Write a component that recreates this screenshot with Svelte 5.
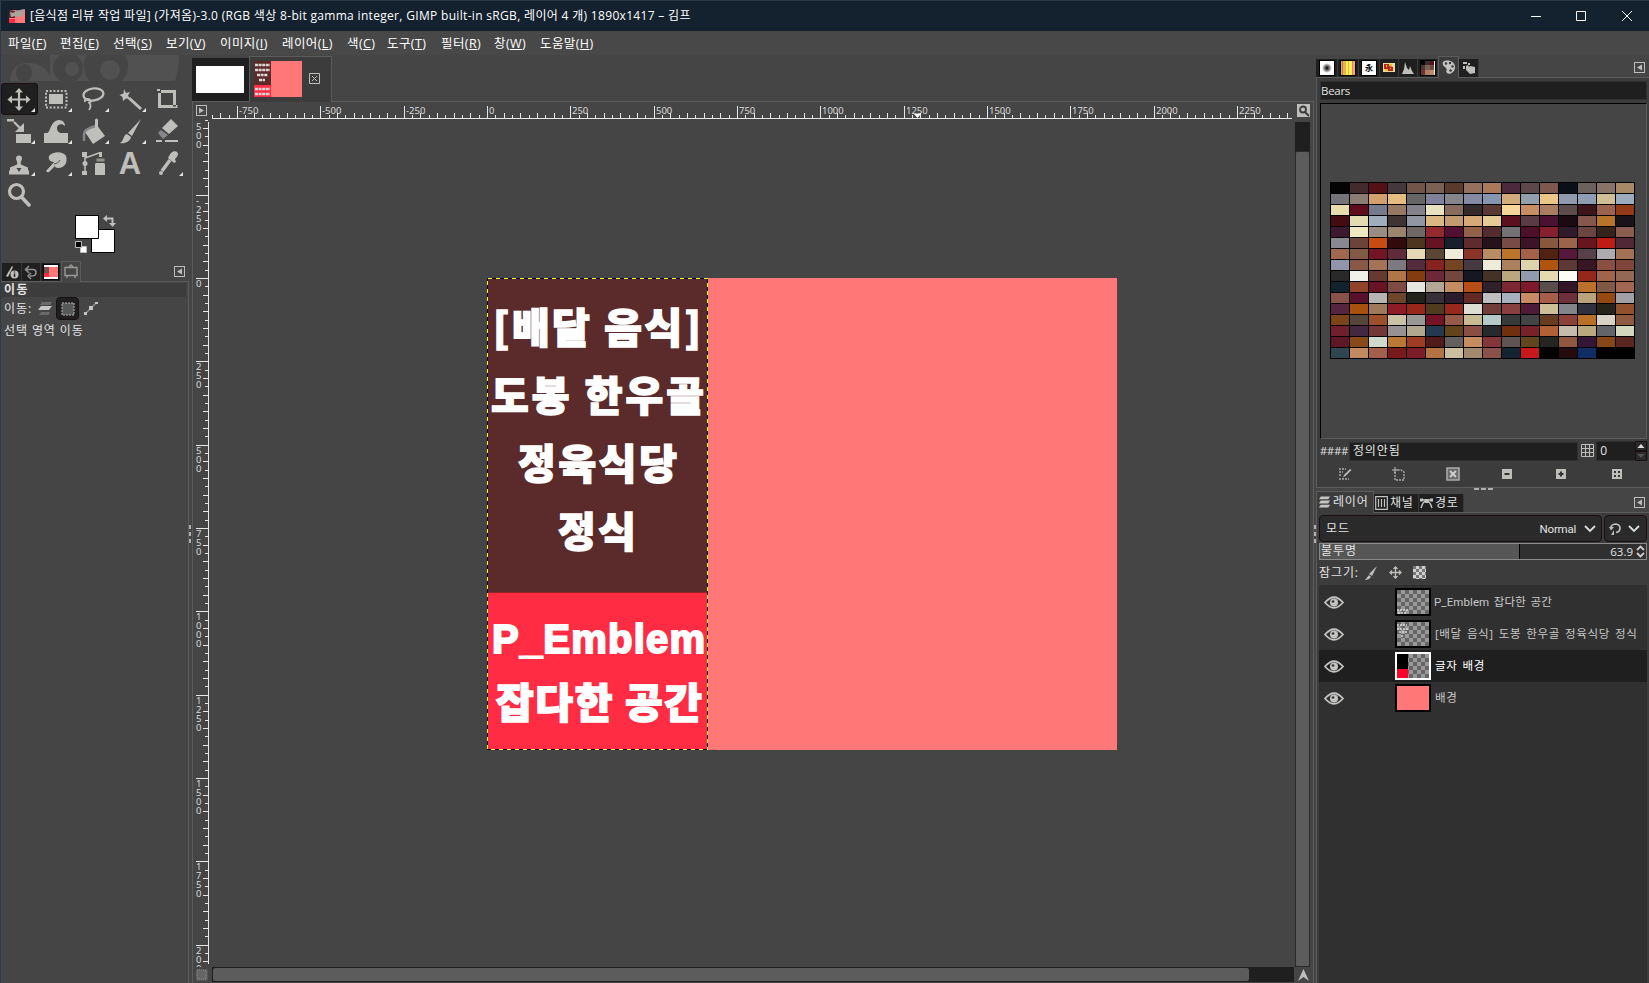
<script lang="ts">
  type Tick = { pos: number; len: number; label: string };

  const menus = [
    { text: '파일', key: 'F', width: 52 },
    { text: '편집', key: 'E', width: 53 },
    { text: '선택', key: 'S', width: 53 },
    { text: '보기', key: 'V', width: 54 },
    { text: '이미지', key: 'I', width: 62 },
    { text: '레이어', key: 'L', width: 65 },
    { text: '색', key: 'C', width: 40 },
    { text: '도구', key: 'T', width: 54 },
    { text: '필터', key: 'R', width: 53 },
    { text: '창', key: 'W', width: 46 },
    { text: '도움말', key: 'H', width: 60 }
  ];

  const tools = [
    { name: 'move', menu: true },
    { name: 'rect', menu: true },
    { name: 'lasso', menu: true },
    { name: 'wand', menu: true },
    { name: 'crop', menu: false },
    { name: 'scale', menu: true },
    { name: 'warp', menu: true },
    { name: 'bucket', menu: true },
    { name: 'brush', menu: true },
    { name: 'eraser', menu: false },
    { name: 'clone', menu: true },
    { name: 'smudge', menu: true },
    { name: 'path', menu: false },
    { name: 'text', menu: false },
    { name: 'picker', menu: true },
    { name: 'zoom', menu: false }
  ];
  let activeTool = $state('move');

  const palette = [
    '040405 432a2d 541014 45383a 715548 7b6054 5b3a2b 96705f a9795a 4d293d 5c474b 7d584f 091019 6c625d 87736a a88967',
    '75737a 8c7b73 d2a06d e6bd80 666666 80829b 85858d 858aa4 8796b0 d3ab7b 929fac ebc687 8f9aae 8f9db2 cfbf93 9cacbf',
    'e7dcab 5d0c1c 767a8c 967763 85818a e8e1bd 876b5d 352a2b 5a3834 f4d498 c68e61 a97d60 5c4d4c 3b151b 9c624d 933b18',
    '440b10 e3dbb1 a0adbd 3e3433 9296a2 dab783 c19a6f d7a976 e5cb94 5b1020 5a3a44 4a1230 1c0a12 86574c b8752a 1a1219',
    '3d1930 efe7bd 9a8c80 9b846e 6f6865 942a2d 511033 93614a 522c2f 727174 4d0f29 86202e 2f1b2a 6b4641 34241b 8b5d4e',
    '898790 6b4339 c84c12 310a0c 4d3520 661423 16202e 5f2b2d 27121b 784b46 3d1427 87583c 9c6449 67151f c01b13 512936',
    'a16850 805c47 741525 5d2b39 e4d8b5 5b4635 efedd9 8a352a b88d63 ba752a a36248 51220f 56173b 58404a adabad a47155',
    '9295aa 865845 a47357 7c7a80 552b3e 86231e 754421 463940 eeecd9 ad805d ded4ab b1540e 5e3935 371522 8a4f43 7e4538',
    '292929 f0efe9 653b30 b17645 823c10 6d2837 74473e 151722 433225 bba77f 919bab e2dab0 fdfcf4 94291b a2634b 936956',
    '13222f 914427 691425 7d4b44 e4e5de b1a794 c58d5f b74e16 30202a 7e2734 7d1929 5a4e4b 321628 bb712c 815844 a26750',
    '88524a 57112d b7b4b4 6b462b 23231e 383038 2b1b2c 632a25 bfbfbf a6b0be c78a62 a65e49 6d303a b8a37c 964812 a29fa6',
    '57243f a8500e a0785a 8d1c27 97271b 503a20 952a1c deddd2 713d39 87403f 4d1b38 cdbf98 83838b 302f3c 282318 91512f',
    '7c4417 54473a 9c512a cbc2a5 9a9895 721426 965b48 c8bb92 b5cac6 383a3a 444444 673d20 8b4039 b77025 d7d2c3 905a40',
    '711f2c 422840 743738 969294 b1a68e 24394d 61441b 8a4e43 262a2c 70300f 77222b b26137 c5bcab b9a77e 63646a d5d6be',
    '5d1727 87481a d1d9ca b87934 9d3c22 501a1b 625f5e c58c62 833539 5f5253 61451b 242421 8f573f 331535 874616 592621',
    '2f454f c38a5f a45f4a 78191b 7f1c2a b37345 cbbf9e a28a6e 8b5148 142331 c8181b 030303 260b0e 102e64 000000 000000'
  ].map((row) => row.split(' '));

  const layers = [
    { name: 'P_Emblem 잡다한 공간', thumb: 'emblem' },
    { name: '[배달 음식] 도봉 한우골 정육식당 정식', thumb: 'title' },
    { name: '글자 배경', thumb: 'block' },
    { name: '배경', thumb: 'solid' }
  ];
  let activeLayer = $state(2);

  // one tick per 25 image pixels, the view is at 33.3 %
  function ticks(origin: number, from: number, to: number): Tick[] {
    const out: Tick[] = [];
    for (let v = -1000; v <= 2500; v += 25) {
      const pos = Math.round(origin + v / 3);
      if (pos < from || pos > to) continue;
      const major = v % 250 === 0;
      out.push({ pos, len: major ? 12 : v % 50 === 0 ? 5 : 3, label: major ? String(v) : '' });
    }
    return out;
  }

  // digits of the vertical ruler are stacked, one every 9 px
  function stack(label: string, top: number): string {
    return label.split('').map((_, i) => top + i * 9).join(' ');
  }

  const hTicks = ticks(487, 212, 1291);
  const vTicks = ticks(278, 120, 963);
</script>

{#snippet collapse()}
  <svg class="collapse" width="11" height="11" viewBox="0 0 11 11">
    <rect x=".5" y=".5" width="10" height="10" fill="none" stroke="#bdbdbd" />
    <path d="M8 2.5v6L3 5.5z" fill="#bdbdbd" />
  </svg>
{/snippet}

{#snippet toolIcon(name: string)}
  {#if name === 'move'}
    <path d="M18 7v19M8.500 16.500h19" stroke="#bebebb" stroke-width="2.200" />
    <path d="M18 5l4 4.500h-8zM18 28l4-4.500h-8zM6.500 16.500l4.500-4v8zM29.500 16.500l-4.500-4v8z" />
  {:else if name === 'rect'}
    <rect x="8" y="8" width="20.500" height="16.500" fill="none" stroke="#bebebb" stroke-width="2" stroke-dasharray="2 1.700" />
    <path d="M11 11h14v10H11z" />
  {:else if name === 'lasso'}
    <ellipse cx="18.500" cy="11.500" rx="10" ry="6" fill="none" stroke="#bebebb" stroke-width="2.200" transform="rotate(-8 18 12)" />
    <path d="M10 19c-1-3 3-4 5-2s0 3-2 2.500M14 19q3 4 0 8" fill="none" stroke="#bebebb" stroke-width="1.800" />
  {:else if name === 'wand'}
    <path d="M12 6l2 4 4-1-2 3.500 2 3.500-4-.5-3 2.500-.5-4-3-2 4-1.500z" />
    <path d="M17 15l12 11" stroke="#bebebb" stroke-width="3" />
  {:else if name === 'crop'}
    <path d="M12 8.500h13.500V22M10.500 10v13.500H24" fill="none" stroke="#bebebb" stroke-width="3" />
    <path d="M8 6h3v2H8zM27 22h1.500v3H24v-1.500h3z" />
  {:else if name === 'scale'}
    <path d="M6 4h7v2.500H6zM15 19h15v9H15z" />
    <path d="M13 7l7 7" stroke="#bebebb" stroke-width="2.200" />
    <path d="M23 8v9h-9z" />
  {:else if name === 'warp'}
    <path d="M6 28V18h3c4-1 3-12 12-13 4 0 6 3 6 6-3-3-8-2-8 2 0 3 2 5 5 5h6v10z" />
  {:else if name === 'bucket'}
    <path d="M21 9l9 12-12 8-8-12z" />
    <path d="M9 26v-7q0-5 12-8" fill="none" stroke="#86868c" stroke-width="2.500" />
    <path d="M21.500 5v10" stroke="#bebebb" stroke-width="3" stroke-linecap="round" />
  {:else if name === 'brush'}
    <path d="M29 4L20 21l-4-3zM15 19l4 3c-1 5-7 7-11 6 4-2 3-8 7-9z" />
  {:else if name === 'eraser'}
    <path d="M22 4l7 7-9 8-7-6z" />
    <path d="M12 15l7 5-5 4-5-6z" fill="#86868c" />
    <path d="M7 26h6M16 26h13" stroke="#bebebb" stroke-width="2" />
  {:else if name === 'clone'}
    <path d="M18 8.500a3 3 0 013 3c0 2-2 3-1 6l7 3v3h1v4H8v-4h1v-3l7-3c1-3-1-4-1-6a3 3 0 013-3z" />
    <path d="M15.500 21l2.500 4 2.500-4z" fill="#454545" />
  {:else if name === 'smudge'}
    <path d="M11 9c4-5 14-5 17 0 2 6-1 12-8 12-2 0-3-1-3-2l-6 6q-2 1-3-1l8-9c-4 0-6-3-5-6z" />
    <path d="M16 17c4-1 5-2 6-4" fill="none" stroke="#454545" />
  {:else if name === 'path'}
    <path d="M10 8v18M10 11L24 6" fill="none" stroke="#bebebb" stroke-width="1.500" />
    <path d="M7 5h5v5H7zM7 24h5v4H7zM24 5h3v5h-3zM21 16h8q1 0 1 2v10H20V18q0-2 1-2z" />
    <circle cx="10" cy="16.500" r="2.500" />
    <path d="M21.500 11.500h8v3h-8z" fill="#96908d" />
  {:else if name === 'text'}
    <text x="18" y="27" text-anchor="middle" class="glyph-a">A</text>
  {:else if name === 'picker'}
    <path d="M22 6c3-3 7-2 7 1 0 2-2 4-3 5l1 3-2 1-6-5 1-2z" />
    <path d="M21 13L13 24" stroke="#bebebb" stroke-width="3.500" />
    <circle cx="12" cy="26" r="2" />
  {:else if name === 'zoom'}
    <circle cx="15.500" cy="12.500" r="7" fill="none" stroke="#bebebb" stroke-width="3.200" />
    <path d="M20.500 18l7.500 8" stroke="#bebebb" stroke-width="3.600" stroke-linecap="round" />
  {/if}
{/snippet}

<svelte:head>
  <title>김프</title>
</svelte:head>

<div class="window">
  <header class="titlebar">
    <svg width="16" height="16" viewBox="0 0 16 16">
      <path fill="#ff7777" d="M0 3l6-1 5 1 5-2v14H0z" />
      <path fill="#5b2b2b" d="M0 3h6v7H0z" />
      <path fill="#ff2c43" d="M0 11h6v4H0z" />
      <path fill="#aaa39c" d="M1 4q4 2 6-1l8-2-1 6q-3 4-7 1L2 9z" />
    </svg>
    <h1>[음식점 리뷰 작업 파일] (가져옴)-3.0 (RGB 색상 8-bit gamma integer, GIMP built-in sRGB, 레이어 4 개) 1890x1417 – 김프</h1>
    <svg class="controls" width="118" height="12" viewBox="0 0 118 12">
      <path d="M1 6.500h10M46.500 1.500h9v9h-9zM92 1l10 10M102 1L92 11" fill="none" stroke="#fff" />
    </svg>
  </header>

  <nav class="menubar">
    {#each menus as m}
      <span style="width: {m.width}px">{m.text}(<u>{m.key}</u>)</span>
    {/each}
  </nav>

  <div class="body">
    <aside class="left">
      <svg class="banner" width="189" height="28" viewBox="0 0 189 28">
        <path d="M10 26c0-25 34-22 40-5V0h129q0 14-4 26z" fill="#515151" />
        <g fill="#454545">
          <ellipse cx="24" cy="18" rx="8" ry="9" />
          <circle cx="68" cy="13" r="15" />
          <circle cx="106" cy="11" r="22" />
        </g>
        <g fill="#515151">
          <circle cx="72" cy="14" r="7" />
          <circle cx="110" cy="15" r="10" />
        </g>
        <path d="M0 26h189v2H0z" fill="#454545" />
      </svg>
      <div class="toolbox">
        {#each tools as tool}
          <button class:active={activeTool === tool.name} aria-label={tool.name} onclick={() => (activeTool = tool.name)}>
            <svg width="37" height="32" viewBox="0 0 37 32" fill="#bebebb">
              {@render toolIcon(tool.name)}
              {#if tool.menu}<path d="M34 25v4h-4z" fill="#e4e4e4" />{/if}
            </svg>
          </button>
        {/each}
      </div>
      <svg class="swatches" width="189" height="50" viewBox="0 211 189 50">
        <path d="M91.500 229.500h23v23h-23z" fill="#fff" stroke="#000" />
        <path d="M75.500 215.500h23v23h-23z" fill="#fff" stroke="#000" />
        <path d="M80.500 246.500h6v6h-6z" fill="#fff" stroke="#bbb" />
        <path d="M75.500 241.500h6v6h-6z" fill="#000" stroke="#bbb" />
        <path d="M105 218.500h7.500v6" fill="none" stroke="#bebebb" stroke-width="2" />
        <path d="M103 218.500l4-3.500v7zM112.500 227l-3.500-4h7z" fill="#bebebb" />
      </svg>
      <div class="dock-tabs left-tabs">
        <span style="width: 20px"><svg width="16" height="16" viewBox="0 0 16 16">
          <path d="M2 12L8 2l1 1-5 10z" fill="#bebebb" /><circle cx="10.500" cy="10.500" r="4" fill="#bebebb" />
          <path d="M10.500 9.500v3.500M10.500 7.500v1" stroke="#222" stroke-width="1.500" />
        </svg></span>
        <span style="width: 19px"><svg width="16" height="16" viewBox="0 0 16 16">
          <path d="M3 5.500h7q3 0 3 3M13 8.500q0 4-6 3.500M6 2L2.500 5.500 6 9M8 9l-3 3 3 3" fill="none" stroke="#8f8f8d" stroke-width="1.600" />
        </svg></span>
        <span style="width: 20px"><svg width="16" height="16" viewBox="0 0 16 16">
          <path d="M0 0h16v16H0z" /><path d="M1 1h14v14H1z" fill="#fff" /><path d="M1 3h14v10H1z" fill="#ff7777" />
          <path d="M1 3h5v6H1z" fill="#77504f" /><path d="M1 9h5v4H1z" fill="#ff2c43" />
        </svg></span>
        <span class="active" style="width: 20px"><svg width="16" height="16" viewBox="0 0 16 16">
          <path d="M2 3.500h12v8H2zM6 3l2-2 2 2M4 11v3M12 11v3" fill="none" stroke="#9a9a98" stroke-width="1.400" />
        </svg></span>
        {@render collapse()}
      </div>
      <section class="tool-options">
        <h2>이동</h2>
        <div class="move-row">
          <span class="ko">이동:</span>
          <svg width="16" height="16" viewBox="0 0 16 16">
            <path d="M5 1h10l-2 3H3z" fill="#6a6a6a" /><path d="M4 5h11l-3 4H1z" fill="#c4c4c2" /><path d="M4 11h9l-1 3H2z" fill="#6a6a6a" />
          </svg>
          <div class="toggle">
            <svg width="14" height="14" viewBox="0 0 14 14"><path d="M1 1h12v12H1z" fill="#585858" stroke="#b5b5b3" stroke-dasharray="2 1" /></svg>
          </div>
          <svg width="15" height="15" viewBox="0 0 15 15">
            <path d="M2 12L12 2" stroke="#8b8b89" stroke-width="1.500" /><path d="M5 5h4v4H5zM0 11h3v3H0zM11 1h3v2h-3z" fill="#c4c4c2" />
          </svg>
        </div>
        <p class="ko">선택 영역 이동</p>
      </section>
    </aside>

    <main class="center">
      <i class="grip"></i>
      <div class="image-tabs">
        <div class="image-tab first"><div class="blank"></div></div>
        <div class="image-tab active">
          <svg width="48" height="36" viewBox="0 0 48 36">
            <path d="M0 0h48v36H0z" fill="#ff7777" /><path d="M0 0h17v24H0z" fill="#5b2b2b" /><path d="M0 24h17v12H0z" fill="#ff2c43" />
            <path d="M1 4h15M1 9h15M3 14h11M5 19h6M1 28h15M1 33h15" stroke="#ddd6d2" stroke-width="2.500" stroke-dasharray="3 .6" />
          </svg>
          <svg width="11" height="11" viewBox="0 0 11 11">
            <path d="M.5.5h10v10H.5zM3 3l5 5M8 3L3 8" fill="none" stroke="#bebebb" />
          </svg>
        </div>
      </div>
      <div class="image-frame">
        <div class="corner">
          <svg width="11" height="11" viewBox="0 0 11 11">
            <rect x=".5" y=".5" width="10" height="10" fill="none" stroke="#bdbdbd" /><path d="M3 2.500v6l5-3z" fill="#bdbdbd" />
          </svg>
        </div>
        <svg class="ruler" width="1084" height="17" viewBox="210 102 1084 17">
          <path d="M212 118.500h1080" stroke="#e6e6e6" />
          {#each hTicks as t}
            <path d="M{t.pos + 0.5} 118v-{t.len}" stroke="#e6e6e6" />
            {#if t.label}<text x={t.pos + 2} y="114">{t.label}</text>{/if}
          {/each}
          <path d="M914 114h7l-3.500 4z" fill="#fff" />
        </svg>
        <div class="corner">
          <svg width="13" height="13" viewBox="0 0 13 13">
            <path d="M0 0h13v13H0z" fill="#bebebb" /><circle cx="6" cy="5.500" r="3" fill="none" stroke="#3c3c3c" stroke-width="1.800" />
            <path d="M8 8l4 4" stroke="#3c3c3c" stroke-width="2" />
          </svg>
        </div>

        <svg class="ruler" width="17" height="848" viewBox="193 119 17 848">
          <path d="M208.500 122v842" stroke="#e6e6e6" />
          {#each vTicks as t}
            <path d="M208 {t.pos + 0.5}h-{t.len}" stroke="#e6e6e6" />
            {#if t.label}
              <text x={'196 '.repeat(t.label.length).trim()} y={stack(t.label, t.pos + 9)}>{t.label}</text>
            {/if}
          {/each}
          <text x="196 196 196" y={stack('500', 130)}>500</text>
        </svg>
        <svg class="canvas" width="1084" height="848" viewBox="210 119 1084 848">
          <path d="M487 278h630v472H487z" fill="#ff7777" />
          <path d="M487 278h221v315H487z" fill="#5b2b2b" />
          <path d="M487 592.500h221V750H487z" fill="#ff2c43" />
          <path d="M487 592.500h221" stroke="#8c2620" />
          <g class="artwork">
            <text x="493" y="343" textLength="208">[배달 음식]</text>
            <text x="491" y="411" textLength="213">도봉 한우골</text>
            <text x="518" y="479" textLength="159">정육식당</text>
            <text x="558" y="547" textLength="78">정식</text>
            <text x="492" y="653" textLength="213" class="latin">P_Emblem</text>
            <text x="496" y="718" textLength="206">잡다한 공간</text>
          </g>
          <rect x="487.500" y="278.500" width="220" height="471" fill="none" stroke="#000" />
          <rect x="487.500" y="278.500" width="220" height="471" fill="none" stroke="#ffff30" stroke-dasharray="4 4" shape-rendering="crispEdges" />
        </svg>
        <div class="vscroll"><div></div></div>

        <div class="corner">
          <svg width="12" height="12" viewBox="0 0 12 12"><path d="M.5.5h11v11H.5z" fill="#666" /><path d="M1 1h9v9H1z" fill="none" stroke="#8e8888" stroke-dasharray="1 1" /></svg>
        </div>
        <div class="hscroll"><div></div></div>
        <div class="corner">
          <svg width="13" height="13" viewBox="0 0 13 13"><path d="M6.500 0l5.500 12-5.500-4-5.500 4z" fill="#bebebb" /></svg>
        </div>
      </div>
    </main>

    <aside class="right">
      <i class="grip"></i>
      <div class="dock-tabs">
        <span style="width: 22px"><svg width="16" height="16" viewBox="0 0 16 16">
          <defs><radialGradient id="soft"><stop offset=".1" stop-color="#111" /><stop offset="1" stop-color="#fff" /></radialGradient></defs>
          <path d="M0 0h16v16H0z" /><path d="M1 1h14v14H1z" fill="#fff" /><circle cx="8" cy="8" r="5" fill="url(#soft)" />
        </svg></span>
        <span style="width: 21px"><svg width="16" height="16" viewBox="0 0 16 16">
          <path d="M0 0h16v16H0z" /><path d="M1 1h14v14H1z" fill="#e8b35c" /><path d="M6 1h2v14H6zM9 1h3v14H9z" fill="#fff34a" />
          <path d="M12 1h1v14h-1z" fill="#f26ca0" /><path d="M2 1h1v14H2z" fill="#c27a30" />
        </svg></span>
        <span style="width: 21px"><svg width="16" height="16" viewBox="0 0 16 16">
          <path d="M0 0h16v16H0z" /><path d="M1 1h14v14H1z" fill="#fff" /><text x="4" y="11" font-size="8" font-weight="700">永</text>
        </svg></span>
        <span style="width: 19px"><svg width="16" height="16" viewBox="0 0 16 16">
          <path d="M2 3h12v9H2z" fill="#ead9a4" /><path d="M3 4h5v5H3zM8 6l4 1v4H7V8z" fill="#b8261a" /><path d="M5 5h1v2H5zM8 4h3v2H8zM4 9h3v2H4zM9 8h1v1H9z" fill="#e9c51c" />
        </svg></span>
        <span style="width: 19px"><svg width="16" height="16" viewBox="0 0 16 16">
          <path d="M2 14l2-5 1-7 2 6 2 2 1-4 2 5 2 3z" fill="#bebebb" />
        </svg></span>
        <span style="width: 20px"><svg width="16" height="16" viewBox="0 0 16 16">
          <path d="M0 0h16v16H0z" /><path d="M5 1h5v4H5z" fill="#432a2d" /><path d="M10 1h4v4h-4z" fill="#541014" />
          <path d="M1 5h4v5H1z" fill="#4b3733" /><path d="M5 5h5v5H5z" fill="#7b6054" /><path d="M10 5h4v5h-4z" fill="#6f4a3a" />
          <path d="M1 10h4v5H1z" fill="#6a3432" /><path d="M5 10h5v5H5z" fill="#b17f68" /><path d="M10 10h4v5h-4z" fill="#c08c65" />
          <path d="M14.500 1v14" stroke="#eee" />
        </svg></span>
        <span class="active" style="width: 21px"><svg width="16" height="16" viewBox="0 0 16 16">
          <path d="M2 3c4-3 12-1 12 5s-6 8-8 6 1-3-1-5-4-3-3-6z" fill="#c4c4c2" />
          <g fill="#3c3c3c"><circle cx="5" cy="4.500" r="1.300" /><circle cx="9" cy="4" r="1.200" /><circle cx="11.500" cy="7.500" r="1.200" /><circle cx="9.500" cy="11.500" r="1.300" /></g>
        </svg></span>
        <span style="width: 20px"><svg width="16" height="16" viewBox="0 0 16 16">
          <path d="M2 2h4v2H2zM7 3h2v2H7zM2 6h2v3H2zM5 6l2-1 1 2 1-1 5 1v6l-5 1-4-4z" fill="#bebebb" />
        </svg></span>
        {@render collapse()}
      </div>
      <section class="palette-panel">
        <div class="entry name">Bears</div>
        <div class="palette-view">
          <div class="palette">
            {#each palette as row}
              {#each row as c}
                <i style="background: #{c}"></i>
              {/each}
            {/each}
          </div>
        </div>
        <div class="color-row">
          <span class="hash">####</span>
          <div class="entry ko">정의안됨</div>
          <svg width="14" height="14" viewBox="0 0 14 14"><path d="M.5.5h12v12H.5zM4.500 0v13M8.500 0v13M0 4.500h13M0 8.500h13" fill="none" stroke="#bebebb" /></svg>
          <div class="entry spin">0
            <svg width="12" height="20" viewBox="0 0 12 20">
              <path d="M.5.5h11v9H.5zM.5 10.500h11v9H.5z" fill="#2a2a2a" stroke="#1a1014" />
              <path d="M6 3l3.500 4h-7z" fill="#ddd" /><path d="M6 17l3.500-4h-7z" fill="#555" />
            </svg>
          </div>
        </div>
        <div class="palette-buttons">
          <svg width="14" height="14" viewBox="0 0 14 14"><path d="M1 2h7M1 5h4M1 8h3M1 12h10" fill="none" stroke="#a9a9a7" stroke-width="1.400" stroke-dasharray="2 1" /><path d="M12 2L6 8l-1 2.500L7.500 9l6-6z" fill="#bebebb" /></svg>
          <svg width="14" height="14" viewBox="0 0 14 14"><path d="M3 5v8h9V5L9 3H5" fill="none" stroke="#a9a9a7" stroke-width="1.400" stroke-dasharray="2 1" /><path d="M3 0v6M0 3h6" stroke="#bebebb" /></svg>
          <svg width="14" height="14" viewBox="0 0 14 14"><path d="M1 1h12v12H1z" fill="#6a6a6a" stroke="#a9a9a7" stroke-width="1.600" /><path d="M4 4l6 6M10 4l-6 6" stroke="#d0d0d0" stroke-width="2" /></svg>
          <svg width="14" height="14" viewBox="0 0 14 14"><path d="M2 2h10v10H2z" fill="#bebebb" /><path d="M4.500 7h5" stroke="#333" stroke-width="2" /></svg>
          <svg width="14" height="14" viewBox="0 0 14 14"><path d="M2 2h10v10H2z" fill="#bebebb" /><path d="M4.500 7h5M7 4.500v5" stroke="#333" stroke-width="2" /></svg>
          <svg width="14" height="14" viewBox="0 0 14 14"><path d="M2 2h10v10H2z" fill="#bebebb" /><path d="M4 4h2v2H4zM8 4h2v2H8zM4 8h2v2H4zM8 8h2v2H8z" fill="#333" /></svg>
        </div>
      </section>
      <div class="hgrip"><i></i><i></i><i></i></div>
      <div class="dock-tabs layer-tabs">
        <span class="active" style="width: 58px">
          <svg width="13" height="14" viewBox="0 0 14 14"><path d="M3 1h10l-2 3H1zM3 5.500h10l-2 3H1zM3 10h10l-2 3H1z" fill="#c4c4c2" /></svg>레이어
        </span>
        <span style="width: 45px">
          <svg width="13" height="14" viewBox="0 0 13 14"><path d="M.7.700h11.600v12.600H.7zM3.500 3v8M6.500 3v8M9.500 3v8" fill="none" stroke="#c4c4c2" stroke-width="1.200" /></svg>채널
        </span>
        <span style="width: 45px">
          <svg width="13" height="14" viewBox="0 0 13 14"><path d="M1 4h11M1 12q2-7 5.500-7t5.500 7" fill="none" stroke="#c4c4c2" stroke-width="1.500" /><path d="M0 2.500h3v3H0zM10 2.500h3v3h-3zM5 3h3.500v4H5z" fill="#c4c4c2" /></svg>경로
        </span>
        {@render collapse()}
      </div>
      <section class="layer-panel">
        <div class="mode-row">
          <div class="combo mode">
            <span class="ko">모드</span>
            <span class="value">Normal</span>
            <svg width="12" height="8" viewBox="0 0 12 8"><path d="M1 1l5 5 5-5" fill="none" stroke="#ddd" stroke-width="1.800" /></svg>
          </div>
          <div class="combo switch">
            <svg width="13" height="13" viewBox="0 0 13 13"><path d="M2 7V5q1-3 5-3 4 1 4 4 0 4-4 4.500" fill="none" stroke="#bebebb" stroke-width="1.700" /><path d="M0 5h5L2 8.500zM5 8v5H2z" fill="#bebebb" /></svg>
            <svg width="12" height="8" viewBox="0 0 12 8"><path d="M1 1l5 5 5-5" fill="none" stroke="#ddd" stroke-width="1.800" /></svg>
          </div>
        </div>
        <div class="opacity">
          <div class="fill" style="width: 61.300%"></div>
          <span class="ko">불투명</span>
          <span class="value">63.9</span>
          <svg width="9" height="13" viewBox="0 0 9 13"><path d="M1 5l3.500-3.500L8 5M1 8l3.500 3.500L8 8" fill="none" stroke="#ccc" stroke-width="1.800" /></svg>
        </div>
        <div class="lock-row">
          <span class="ko">잠그기:</span>
          <svg width="13" height="14" viewBox="0 0 13 14"><path d="M12 0L7 10 4 8zM4 9l2 2q-2 3-6 3z" fill="#bebebb" /></svg>
          <svg width="13" height="13" viewBox="0 0 13 13"><path d="M6.500 1v11M1 6.500h11M4.500 3l2-2 2 2M4.500 10l2 2 2-2M3 4.500l-2 2 2 2M10 4.500l2 2-2 2" fill="none" stroke="#bebebb" stroke-width="1.300" /></svg>
          <i class="checker"></i>
        </div>
        <ul class="layers">
          {#each layers as layer, i}
            <li class:active={activeLayer === i}>
              <button onclick={() => (activeLayer = i)}>
                <svg class="eye" width="20" height="13" viewBox="0 0 20 13">
                  <path d="M1 6.500Q10-4 19 6.500 10 17 1 6.500z" fill="none" stroke="#c4c4c2" stroke-width="1.800" />
                  <circle cx="10" cy="6.500" r="4" fill="#c4c4c2" /><circle cx="9" cy="5.500" r="1.300" fill="#303030" />
                </svg>
                <span class="thumb {layer.thumb}">
                  <svg width="32" height="24" viewBox="0 0 32 24">
                    {#if layer.thumb === 'emblem'}
                      <path d="M0 20h11M1 23h9" stroke="#d8d8d8" stroke-width="1.500" stroke-dasharray="2 1" />
                    {:else if layer.thumb === 'title'}
                      <path d="M0 3h10M0 7h11M2 10h8M4 14h3" stroke="#d8d8d8" stroke-width="1.500" stroke-dasharray="2 1" />
                    {:else if layer.thumb === 'block'}
                      <path d="M0 0h11v15H0z" /><path d="M0 15h11v9H0z" fill="#ff0028" />
                    {/if}
                  </svg>
                </span>
                <span class="layer-name" class:mixed={layer.thumb === 'emblem'}>{layer.name}</span>
              </button>
            </li>
          {/each}
        </ul>
      </section>
    </aside>
  </div>
</div>

<style>
  :global(body) {
    margin: 0;
    background: #454545;
  }

  .window {
    width: 1649px;
    height: 983px;
    overflow: hidden;
    display: flex;
    flex-direction: column;
    background: #454545;
    color: #e2e2e2;
    font: 12px/16px 'Open Sans', 'Noto Sans CJK KR', sans-serif;
    box-sizing: border-box;
    border-left: 1px solid #303b47;
  }

  .window :global(*) {
    box-sizing: border-box;
  }

  svg {
    display: block;
    flex: none;
  }

  button {
    padding: 0;
    border: 0;
    background: none;
    color: inherit;
    font: inherit;
  }

  .titlebar {
    height: 31px;
    flex: none;
    display: flex;
    align-items: center;
    padding: 0 1px 0 8px;
    background: #14212e;
    border-top: 1px solid #2a3745;
  }

  h1 {
    margin: 0 0 0 5px;
    font-size: 12px;
    font-weight: 400;
    letter-spacing: 0.32px;
    color: #fff;
    white-space: nowrap;
  }

  .controls {
    margin-left: auto;
  }

  .menubar {
    height: 24px;
    flex: none;
    display: flex;
    align-items: center;
    padding: 1px 0 0 7px;
    background: #484848;
    color: #fff;
    font-size: 12.5px;
    letter-spacing: 0.4px;
  }

  .menubar span {
    white-space: nowrap;
  }

  .body {
    flex: 1;
    min-height: 0;
    display: flex;
  }

  .left {
    width: 190px;
    display: flex;
    flex-direction: column;
  }

  .banner {
    margin-left: -1px;
  }

  .toolbox {
    width: 185px;
    display: grid;
    grid-template-columns: repeat(5, 37px);
    grid-auto-rows: 32px;
  }

  .toolbox button.active {
    background: #1f1f1f;
    border-radius: 4px;
    box-shadow: inset 0 0 0 1px #1a1014;
  }

  .glyph-a {
    font: bold 31px/1 'Liberation Sans', sans-serif;
  }

  .swatches {
    margin-left: -1px;
  }

  .dock-tabs {
    display: flex;
    align-items: flex-end;
    position: relative;
    z-index: 1;
  }

  .dock-tabs span {
    height: 18px;
    display: flex;
    align-items: center;
    justify-content: center;
    background: #1f1f1f;
    border-right: 1px solid #393939;
    margin-bottom: 1px;
  }

  .dock-tabs span.active {
    height: 21px;
    margin-bottom: 0;
    padding-bottom: 1px;
    background: #3c3c3c;
    border: 1px solid #5c5c5c;
    border-bottom: 0;
  }

  .collapse {
    margin: 0 4px 5px auto;
  }

  .left-tabs {
    height: 21px;
    padding-left: 1px;
  }

  .left-tabs .collapse {
    margin-right: 6px;
  }

  .left-tabs span.active {
    background: #454545;
  }

  .tool-options {
    flex: 1;
    width: 188px;
    margin-top: -1px;
    padding: 1px 2px 0 0;
    border: 1px solid #5c5c5c;
    border-width: 1px 1px 0 0;
  }

  h2 {
    margin: 0;
    height: 14px;
    padding-left: 3px;
    background: #3c3c3c;
    font-size: 12px;
    line-height: 13px;
    letter-spacing: 1.500px;
  }

  .ko {
    letter-spacing: 0.9px;
    white-space: nowrap;
  }

  .move-row {
    height: 23px;
    display: flex;
    align-items: center;
    padding-left: 3px;
  }

  .move-row .ko {
    width: 33px;
  }

  .toggle {
    width: 23px;
    height: 23px;
    margin: 0 5px 0 3px;
    display: grid;
    place-items: center;
    background: #1f1f1f;
    border: 1px solid #1a1014;
    border-radius: 4px;
  }

  p {
    margin: 3px 0 0 3px;
  }

  .center {
    position: relative;
    width: 1125px;
    display: flex;
    flex-direction: column;
    padding: 0 2px 0 1px;
  }

  .grip {
    position: absolute;
    left: -2px;
    top: 470px;
    width: 2px;
    height: 19px;
    background: repeating-linear-gradient(#b0b0b0 0 4px, transparent 4px 7px);
  }

  .image-tabs {
    height: 46px;
    display: flex;
    align-items: flex-end;
  }

  .image-tab {
    display: flex;
    align-items: center;
  }

  .image-tab.first {
    width: 57px;
    height: 43px;
    padding: 0 4px;
    background: #1f1f1f;
  }

  .blank {
    width: 48px;
    height: 27px;
    background: #fff;
  }

  .image-tab.active {
    position: relative;
    z-index: 1;
    width: 83px;
    height: 46px;
    margin-bottom: -1px;
    padding: 0 0 2px 4px;
    gap: 7px;
    background: #3c3c3c;
    border: 1px solid #5c5c5c;
    border-bottom: 0;
  }

  .image-frame {
    flex: 1;
    display: grid;
    grid-template: 17px 848px 16px / 17px 1084px 19px;
    border: 1px solid #5c5c5c;
    border-bottom: 0;
  }

  .corner {
    display: grid;
    place-items: center;
  }

  .ruler text {
    font: 9.500px 'Noto Sans', sans-serif;
    fill: #dadada;
  }

  .artwork {
    font: 900 41px 'Noto Sans CJK KR', sans-serif;
    fill: #fff;
    stroke: #fff;
    stroke-width: 1.500;
  }

  .artwork .latin {
    font: bold 40px 'Liberation Sans', sans-serif;
    stroke-width: 2;
  }

  .vscroll {
    width: 15px;
    margin: 3px 0 0 1px;
    padding-top: 29px;
    background: #1f1f1f;
  }

  .vscroll div {
    height: 816px;
    background: #5c5c5c;
    border: 1px solid #2a2a2a;
    border-radius: 2px;
  }

  .hscroll {
    height: 15px;
    margin: 0 0 0 2px;
    background: #1f1f1f;
    padding: 1px;
  }

  .hscroll div {
    width: 1036px;
    height: 13px;
    background: #5c5c5c;
    border-radius: 2px;
  }

  .right {
    position: relative;
    width: 333px;
    display: flex;
    flex-direction: column;
  }

  .right .dock-tabs {
    height: 23px;
  }

  .right .dock-tabs span.active {
    height: 22px;
  }

  .palette-panel {
    height: 411px;
    margin-top: -1px;
    padding: 4px 2px 0 4px;
    background: #3c3c3c;
    border: 1px solid #5c5c5c;
    border-right: 0;
  }

  .entry {
    background: #1f1f1f;
    box-shadow: 0 0 0 1px #303030;
  }

  .name {
    height: 17px;
    margin-right: 1px;
    line-height: 17px;
    font-size: 11.500px;
    letter-spacing: -0.3px;
  }

  .palette-view {
    height: 336px;
    margin: 4px 0 0 -1px;
    padding: 78px 0 0 9px;
    background: #454545;
    border: 1px solid #000;
    border-color: #000 #5c5c5c #5c5c5c #000;
  }

  .palette {
    display: grid;
    grid-template-columns: repeat(16, 18px);
    grid-auto-rows: 10px;
    gap: 1px;
    width: 305px;
    padding: 1px;
    background: #000;
  }

  .color-row {
    height: 20px;
    margin: 2px 0 0 -1px;
    display: flex;
    align-items: center;
  }

  .hash {
    width: 30px;
    font-size: 11px;
  }

  .color-row .entry {
    width: 228px;
    height: 17px;
    padding-left: 3px;
    margin-right: 4px;
  }

  .color-row .spin {
    width: 50px;
    height: 18px;
    margin: 0 0 0 2px;
    display: flex;
    align-items: center;
    justify-content: space-between;
  }

  .palette-buttons {
    height: 26px;
    display: flex;
    align-items: center;
    gap: 40px;
    padding-left: 17px;
  }

  .palette-buttons svg:last-child {
    margin-left: 2px;
  }

  .hgrip {
    height: 3px;
    display: flex;
    gap: 2px;
    padding-left: 158px;
  }

  .hgrip i {
    width: 5px;
    height: 2px;
    background: #b0b0b0;
  }

  .right .layer-tabs {
    letter-spacing: 0.8px;
    height: 22px;
  }

  .layer-tabs span {
    gap: 2px;
    justify-content: flex-start;
    padding-left: 1px;
    white-space: nowrap;
  }

  .layer-panel {
    flex: 1;
    display: flex;
    flex-direction: column;
    margin-top: -1px;
    padding: 2px 2px 0 2px;
    background: #3c3c3c;
    border: 1px solid #5c5c5c;
    border-width: 1px 0 0 1px;
  }

  .mode-row {
    display: flex;
    gap: 2px;
  }

  .combo {
    height: 27px;
    display: flex;
    align-items: center;
    background: #2a2a2a;
    border: 1px solid #1a1014;
    border-radius: 4px;
  }

  .mode {
    width: 284px;
    padding: 0 5px 0 6px;
  }

  .mode .value {
    margin: 0 8px 0 auto;
    font-family: Roboto, sans-serif;
    font-size: 11.500px;
    letter-spacing: -0.2px;
  }

  .switch {
    width: 43px;
    gap: 6px;
    padding-left: 4px;
  }

  .opacity {
    position: relative;
    height: 17px;
    margin-top: 1px;
    display: flex;
    align-items: center;
    padding: 0 1px 0 1px;
    border: 1px solid #8a8a8a;
    background: #303030;
  }

  .fill {
    position: absolute;
    inset: 0 auto 0 0;
    background: #565656;
    border-right: 1px solid #000;
  }

  .opacity span {
    position: relative;
  }

  .opacity .ko {
    margin-top: -2px;
    line-height: 14px;
  }

  .opacity .value {
    margin: 0 3px 0 auto;
    font-size: 11.500px;
  }

  .lock-row {
    height: 25px;
    display: flex;
    align-items: center;
    gap: 11px;
  }

  .lock-row .ko {
    width: 35px;
  }

  .checker {
    width: 13px;
    height: 13px;
    background: repeating-conic-gradient(#d0d0d0 0 25%, #777 0 50%) 0 0 / 6px 6px;
  }

  .layers {
    flex: 1;
    margin: 0;
    padding: 1px 0 0;
    list-style: none;
    background: #303030;
    border-radius: 3px 3px 0 0;
    color: #c8c8c8;
  }

  li {
    height: 32px;
  }

  li.active {
    background: #1f1f1f;
    color: #fff;
  }

  li button {
    width: 100%;
    height: 32px;
    display: flex;
    align-items: center;
  }

  .eye {
    margin: 0 51px 0 5px;
  }

  .thumb {
    width: 36px;
    height: 28px;
    border: 2px solid #000;
    background: repeating-conic-gradient(#999 0 25%, #666 0 50%) 0 0 / 8px 8px;
  }

  li.active .thumb {
    border-color: #fff;
  }

  .thumb.solid {
    background: #ff7777;
  }

  .layer-name {
    margin-left: 4px;
    font-size: 11.500px;
    letter-spacing: 0.6px;
    word-spacing: 1.600px;
    white-space: nowrap;
  }

  .layer-name.mixed {
    margin-left: 3px;
    font-family: Roboto, 'Noto Sans CJK KR', sans-serif;
    letter-spacing: 0.1px;
  }
</style>
